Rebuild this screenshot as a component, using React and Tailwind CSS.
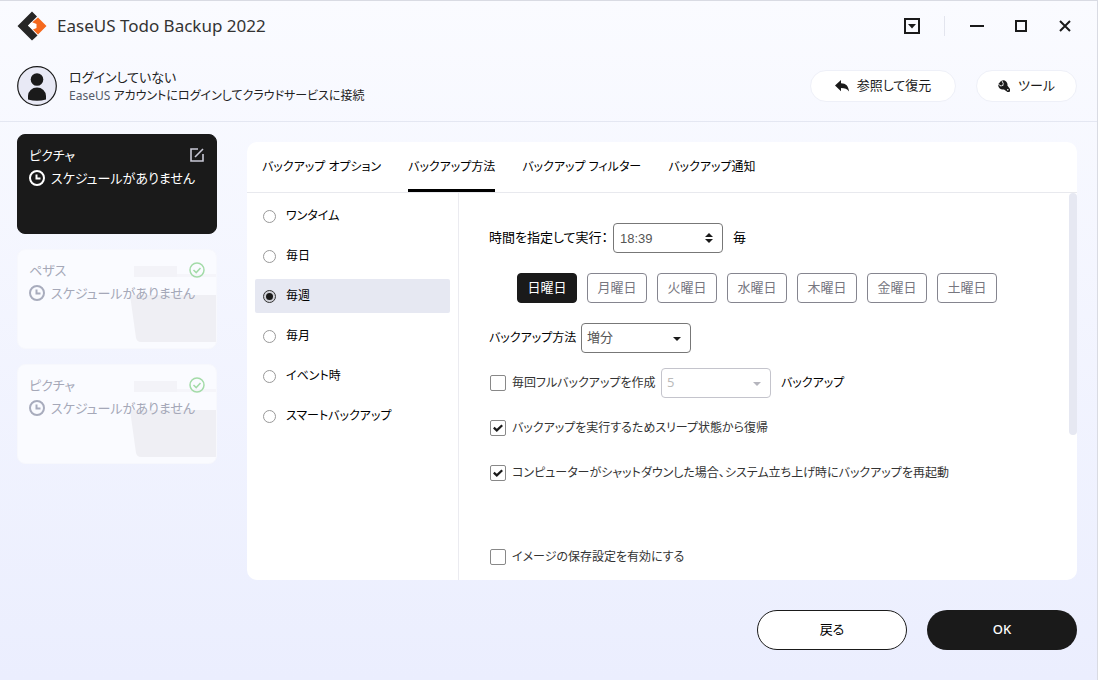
import React, { useState } from "react";

const tabs = [
  "バックアップ オプション",
  "バックアップ方法",
  "バックアップ フィルター",
  "バックアップ通知",
];

const schedules = [
  "ワンタイム",
  "毎日",
  "毎週",
  "毎月",
  "イベント時",
  "スマートバックアップ",
];

const weekdays = [
  "日曜日",
  "月曜日",
  "火曜日",
  "水曜日",
  "木曜日",
  "金曜日",
  "土曜日",
];

const tasks = [
  { id: 1, name: "ピクチャ" },
  { id: 2, name: "ペザス" },
  { id: 3, name: "ピクチャ" },
];

const Logo = () => (
  <svg width="30" height="30" viewBox="0 0 30 30" aria-hidden="true">
    <path d="M15 0.5 L20 5.5 L11 14.5 L20.5 24.5 L15 29.5 L0.5 15 Z" fill="#262626" />
    <path d="M21 6.5 L29.5 15 L21 23.5 L15.5 18 L19 15 L15 11.5 Z" fill="#f5691e" />
    <path d="M14.5 11 L19.5 13 V17 L16 18.5 L11 14.8 Z" fill="#fff" />
  </svg>
);

const Clock = ({ className }) => (
  <svg width="16" height="16" viewBox="0 0 16 16" fill="none" stroke="currentColor" strokeWidth="2" className={className} aria-hidden="true">
    <circle cx="8" cy="8" r="7" />
    <path d="M7.5 4.5 V8.5 H11.5" />
  </svg>
);

const TitleBar = () => (
  <div className="flex h-[50px] items-center pr-5 pl-[17px]">
    <Logo />
    <h1 className="ml-[10px] flex-1 font-['Noto_Sans'] text-[17px] leading-6 text-[#333]">
      EaseUS Todo Backup 2022
    </h1>
    <button type="button" aria-label="メニュー" className="flex size-6 items-center justify-center">
      <svg width="16" height="16" viewBox="0 0 16 16">
        <rect x="1" y="1" width="14" height="14" fill="none" stroke="#1a1a1a" strokeWidth="2" />
        <path d="M4 6 H12 L8 10.5 Z" fill="#1a1a1a" />
      </svg>
    </button>
    <span className="mx-5 h-5 w-px bg-[#e3e5ee]" />
    <div className="flex gap-5">
      <button type="button" aria-label="最小化" className="flex size-6 items-center justify-center">
        <svg width="14" height="14" viewBox="0 0 14 14" stroke="#1a1a1a" strokeWidth="2">
          <path d="M0 7 H14" />
        </svg>
      </button>
      <button type="button" aria-label="最大化" className="flex size-6 items-center justify-center">
        <svg width="12" height="12" viewBox="0 0 12 12" fill="none" stroke="#1a1a1a" strokeWidth="2">
          <rect x="1" y="1" width="10" height="10" />
        </svg>
      </button>
      <button type="button" aria-label="閉じる" className="flex size-6 items-center justify-center">
        <svg width="12" height="12" viewBox="0 0 12 12" stroke="#1a1a1a" strokeWidth="2">
          <path d="M1 1 L11 11 M11 1 L1 11" />
        </svg>
      </button>
    </div>
  </div>
);

const AccountBar = () => (
  <div className="flex h-[71px] items-center border-b border-[#e4e7f2] pr-5 pl-[17px]">
    <svg width="40" height="40" viewBox="0 0 40 40" aria-hidden="true">
      <circle cx="20" cy="20" r="19.3" fill="#e8e9f5" stroke="#1a1a1a" strokeWidth="1.2" />
      <circle cx="20" cy="13.5" r="6.3" fill="#1a1a1a" />
      <path d="M11 33.5 V30 A9 8.5 0 0 1 29 30 V33.5 Q20 36 11 33.5 Z" fill="#1a1a1a" />
    </svg>
    <div className="ml-3 flex-1">
      <p className="text-[13px] leading-5 text-[#222]">ログインしていない</p>
      <p className="text-[12px] leading-[18px] text-[#222]">
        <span className="text-[#555b68]">EaseUS</span> アカウントにログインしてクラウドサービスに接続
      </p>
    </div>
    <button type="button" className="flex h-8 w-[146px] items-center justify-center gap-2 rounded-full border border-[#eef0f8] bg-white text-[13px] text-[#1a1a1a]">
      <svg width="14" height="12" viewBox="0 0 14 12" fill="#1a1a1a">
        <path d="M6 0 V3.2 C11 3.2 13.5 6 14 11.5 C12 8.8 10 8 6 8 V11.2 L0 5.6 Z" />
      </svg>
      参照して復元
    </button>
    <button type="button" className="ml-5 flex h-8 w-[101px] items-center justify-center gap-2 rounded-full border border-[#eef0f8] bg-white text-[13px] text-[#1a1a1a]">
      <svg width="12" height="12" viewBox="0 0 12 12">
        <path d="M4 0.4 A4.3 4.3 0 0 1 9.4 5.4 L11.6 8.4 A2 2 0 0 1 8.8 11.6 L6 9.4 A4.5 4.5 0 0 1 0.3 4.4 L2.8 6.6 L5.4 5.6 L5.6 3 Z" fill="#1a1a1a" />
        <path d="M3.4 0.6 L0.4 4 L3.4 5.8 L5 4 Z" fill="#1a1a1a" />
        <circle cx="9.8" cy="9.8" r="0.8" fill="#fff" />
      </svg>
      ツール
    </button>
  </div>
);

const TaskCard = ({ task, active, onSelect }) => (
  <button
    type="button"
    onClick={() => onSelect(task.id)}
    className={`relative flex h-[100px] w-full flex-col gap-px overflow-hidden rounded-lg border pt-[9px] pr-[11px] pl-[11px] text-left text-[13px] leading-[22px] ${
      active ? "border-[#1a1a1a] bg-[#1a1a1a] text-white" : "border-[#f7f8fd] bg-[#fafbff] text-[#a5a8b8]"
    }`}
  >
    {!active && (
      <svg width="86" height="78" viewBox="0 0 86 78" className="absolute right-0 bottom-1" aria-hidden="true">
        <rect x="4" y="0" width="43" height="11" fill="#f3f3f8" />
        <rect x="47" y="8" width="39" height="3" fill="#f5f5fa" />
        <path d="M0 29 H86 V76 H11 Q7 76 6 72 Z" fill="#efeff4" />
      </svg>
    )}
    <span className="relative flex w-full items-center justify-between">
      {task.name}
      {active ? (
        <svg width="16" height="16" viewBox="0 0 16 16" fill="none" stroke="#c9c9d6" strokeWidth="1.6">
          <path d="M9 2 H2 V14 H14 V7 M6 10 L14 2" />
        </svg>
      ) : (
        <svg width="16" height="16" viewBox="0 0 16 16" fill="none" stroke="#a3dba8" strokeWidth="1.5">
          <circle cx="8" cy="8" r="7" />
          <path d="M4.5 8 L7.2 10.6 L11.5 6" />
        </svg>
      )}
    </span>
    <span className="relative flex items-center gap-[6px] whitespace-nowrap">
      <Clock className={active ? "shrink-0 text-white" : "shrink-0 text-[#a8acbd]"} />
      スケジュールがありません
    </span>
  </button>
);

const Dropdown = ({ id, label, value, options, disabled }) => (
  <div className="relative h-[30px] w-[110px]">
    <select
      id={id}
      aria-label={label}
      defaultValue={value}
      disabled={disabled}
      className="size-full appearance-none rounded-sm border border-[#777] bg-white pl-[5px] text-[13px] text-[#555] opacity-100 disabled:border-[#c4c4cc] disabled:text-[#bbb]"
    >
      {options.map((option) => (
        <option key={option}>{option}</option>
      ))}
    </select>
    <svg width="8" height="4" viewBox="0 0 8 4" fill={disabled ? "#b5b5bd" : "#1a1a1a"} className="pointer-events-none absolute top-[14px] right-[10px]">
      <path d="M0 0 H8 L4 4 Z" />
    </svg>
  </div>
);

const CheckBox = ({ label, defaultChecked }) => (
  <label className="flex h-[30px] items-center gap-[6px] pl-px text-[12px] whitespace-nowrap text-[#333]">
    <span className="relative size-4">
      <input
        type="checkbox"
        defaultChecked={defaultChecked}
        className="peer block size-4 appearance-none rounded-xs border border-[#888] bg-white"
      />
      <svg width="10" height="8" viewBox="0 0 10 8" fill="none" stroke="#1a1a1a" strokeWidth="2.2" className="pointer-events-none absolute top-1 left-[3px] hidden peer-checked:block">
        <path d="M0.8 3.6 L3.8 6.4 L9.2 1.2" />
      </svg>
    </span>
    {label}
  </label>
);

const ScheduleList = ({ selected, onSelect }) => (
  <div className="flex w-[212px] shrink-0 flex-col gap-[6px] border-r border-[#ebebf0] py-[6px] pr-2 pl-2">
    {schedules.map((schedule) => (
      <label
        key={schedule}
        className={`flex h-[34px] items-center gap-[10px] rounded-xs px-2 text-[12px] text-black ${
          selected === schedule ? "bg-[#e6e8f2]" : ""
        }`}
      >
        <input
          type="radio"
          name="schedule"
          checked={selected === schedule}
          onChange={() => onSelect(schedule)}
          className="flex size-[13px] appearance-none items-center justify-center rounded-full border border-[#999] bg-white before:size-[7px] before:rounded-full checked:border-[#333] checked:bg-[#d0d1d8] checked:before:bg-[#1a1a1a]"
        />
        {schedule}
      </label>
    ))}
  </div>
);

const ScheduleForm = () => {
  const [days, setDays] = useState(["日曜日"]);

  const toggleDay = (day) => {
    setDays(days.includes(day) ? days.filter((d) => d !== day) : [...days, day]);
  };

  return (
    <div className="flex flex-1 flex-col pt-[30px] pb-2 pl-[30px] text-[12px] text-black">
      <div className="flex h-[30px] items-center gap-[10px]">
        <label htmlFor="time" className="w-[114px] text-[13px] whitespace-nowrap">時間を指定して実行：</label>
        <div className="relative h-[30px] w-[110px]">
          <input
            id="time"
            type="text"
            defaultValue="18:39"
            className="size-full rounded-sm border border-[#777] bg-white pl-[6px] font-['Liberation_Sans'] text-[13px] text-[#555]"
          />
          <svg width="8" height="10" viewBox="0 0 8 10" fill="#1a1a1a" className="pointer-events-none absolute top-[10px] right-[10px]">
            <path d="M0 4 H8 L4 0 Z M0 6 H8 L4 10 Z" />
          </svg>
        </div>
        <span className="text-[13px]">毎</span>
      </div>
      <div className="mt-5 flex gap-[10px] pl-7">
        {weekdays.map((day) => (
          <button
            key={day}
            type="button"
            aria-pressed={days.includes(day)}
            onClick={() => toggleDay(day)}
            className={`h-[30px] w-[60px] rounded-sm border text-[13px] whitespace-nowrap ${
              days.includes(day)
                ? "border-[#1a1a1a] bg-[#1a1a1a] text-white"
                : "border-[#85858f] bg-white text-[#77777f]"
            }`}
          >
            {day}
          </button>
        ))}
      </div>
      <div className="mt-5 flex items-center gap-[10px]">
        <label htmlFor="method" className="w-[82px] whitespace-nowrap">バックアップ方法</label>
        <Dropdown id="method" value="増分" options={["増分", "差分", "完全"]} />
      </div>
      <div className="mt-[15px] flex items-center gap-[10px]">
        <div className="w-[162px]">
          <CheckBox label="毎回フルバックアップを作成" />
        </div>
        <Dropdown id="full" label="バックアップの回数" value="5" options={["5", "10", "15"]} disabled />
        <span>バックアップ</span>
      </div>
      <div className="mt-[15px]">
        <CheckBox label="バックアップを実行するためスリープ状態から復帰" defaultChecked />
      </div>
      <div className="mt-[15px]">
        <CheckBox label="コンピューターがシャットダウンした場合、システム立ち上げ時にバックアップを再起動" defaultChecked />
      </div>
      <div className="mt-[54px]">
        <CheckBox label="イメージの保存設定を有効にする" />
      </div>
    </div>
  );
};

const App = () => {
  const [activeTask, setActiveTask] = useState(1);
  const [activeTab, setActiveTab] = useState("バックアップ方法");
  const [schedule, setSchedule] = useState("毎週");

  return (
    <div
      lang="ja"
      className="flex min-h-screen flex-col border-t border-r border-[#d9dbe3] bg-linear-to-b from-[#fafbff] to-[#ebeefe] font-['Noto_Sans','Noto_Sans_CJK_JP',sans-serif] [font-feature-settings:'palt']"
    >
      <header>
        <TitleBar />
        <AccountBar />
      </header>
      <main className="flex flex-1 gap-[30px] pt-3 pr-5 pl-[17px]">
        <aside className="flex w-[200px] shrink-0 flex-col gap-[15px]">
          {tasks.map((task) => (
            <TaskCard key={task.id} task={task} active={task.id === activeTask} onSelect={setActiveTask} />
          ))}
        </aside>
        <section className="mt-2 flex flex-1 flex-col overflow-hidden rounded-[10px] bg-white">
          <div role="tablist" className="flex h-[51px] gap-[27px] border-b border-[#e8e9ee] pl-[15px]">
            {tabs.map((tab) => (
              <button
                key={tab}
                type="button"
                role="tab"
                aria-selected={tab === activeTab}
                onClick={() => setActiveTab(tab)}
                className={`border-b-3 pt-[3px] text-[12px] whitespace-nowrap text-black ${
                  tab === activeTab ? "border-black" : "border-transparent"
                }`}
              >
                {tab}
              </button>
            ))}
          </div>
          <div className="flex flex-1">
            <ScheduleList selected={schedule} onSelect={setSchedule} />
            <ScheduleForm />
            <div className="h-[242px] w-2 rounded-full bg-[#e6e8f2]" />
          </div>
        </section>
      </main>
      <footer className="flex justify-end gap-5 pt-[30px] pr-5 pb-[30px] text-[13px]">
        <button type="button" className="h-10 w-[150px] rounded-full border border-[#1a1a1a] bg-white text-black">
          戻る
        </button>
        <button type="button" className="h-10 w-[150px] rounded-full bg-[#1a1a1a] font-medium text-white">
          OK
        </button>
      </footer>
    </div>
  );
};

export default App;
